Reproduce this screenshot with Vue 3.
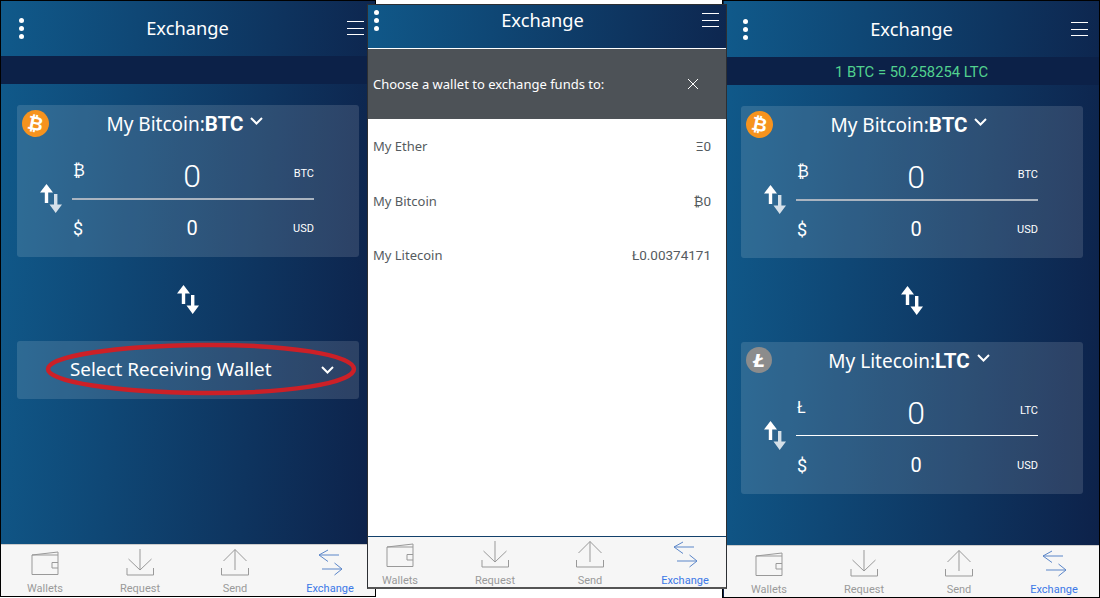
<template>
  <div class="canvas">
    <div v-for="s in screens" :key="s.id" :class="['frame', 'frame-' + s.id]">
      <div class="screen">
        <header class="topbar">
          <span class="dots"><i></i><i></i><i></i></span>
          <h1 class="page-title">Exchange</h1>
          <span class="burger"><i></i><i></i><i></i></span>
        </header>

        <!-- wallet picker -->
        <main v-if="s.picker" class="picker">
          <div class="picker-head">
            <span>Choose a wallet to exchange funds to:</span>
            <svg class="close" width="12" height="12" viewBox="0 0 12 12"><path d="M1 1 11 11M11 1 1 11" /></svg>
          </div>
          <div v-for="w in wallets" :key="w.name" class="picker-row">
            <span>{{ w.name }}</span>
            <span class="picker-amount">{{ w.amount }}</span>
          </div>
        </main>

        <main v-else class="content">
          <div class="rate">{{ s.rate }}</div>
          <div class="cards">
            <template v-for="(card, i) in s.cards" :key="i">
              <div v-if="i === 1" class="swap">
                <svg class="swap-icon" width="22" height="29" viewBox="0 0 22 29"><path d="M0 8.5 6.5 0 13 8.5H8.2V19H4.8V8.5ZM9.5 20.5H14V10H17.4V20.5H22L15.7 29Z" /></svg>
              </div>
              <div v-if="card.coin" class="card">
                <div class="card-title">
                  <span :class="['coin', 'coin-' + card.unit]">{{ card.logo }}</span>
                  <span>{{ card.coin }}:<b>{{ card.unit }}</b></span>
                  <svg class="chevron" width="13" height="8" viewBox="0 0 13 8"><path d="M1 1 6.5 6.5 12 1" /></svg>
                </div>
                <div class="card-body">
                  <div class="card-swap">
                    <svg class="swap-icon" width="22" height="29" viewBox="0 0 22 29"><path d="M0 8.5 6.5 0 13 8.5H8.2V19H4.8V8.5Z" /><path class="dim" d="M9.5 20.5H14V10H17.4V20.5H22L15.7 29Z" /></svg>
                  </div>
                  <div class="convert">
                    <div class="convert-row top">
                      <span class="symbol">{{ card.symbol }}</span>
                      <span class="big">0</span>
                      <span class="unit">{{ card.unit }}</span>
                    </div>
                    <div :class="['rule', { thin: card.thin }]"></div>
                    <div class="convert-row bottom">
                      <span class="symbol">$</span>
                      <span class="small">0</span>
                      <span class="unit">USD</span>
                    </div>
                  </div>
                </div>
              </div>
              <div v-else class="card select-card">
                <span>Select Receiving Wallet</span>
                <svg class="chevron" width="13" height="8" viewBox="0 0 13 8"><path d="M1 1 6.5 6.5 12 1" /></svg>
                <svg class="circled" width="316" height="54" viewBox="0 0 316 54"><path d="M157 3C243 2 310 13 310 27 310 41 243 52 157 51 72 50 4 40 4 27 4 14 72 4 157 3Z" /></svg>
              </div>
            </template>
          </div>
        </main>

        <nav class="tabbar">
          <div v-for="t in tabs" :key="t.label" :class="['tab', { active: t.active }]">
            <svg width="40" height="30" viewBox="0 0 40 30"><path v-for="d in t.paths" :key="d" :d="d" /></svg>
            <span>{{ t.label }}</span>
          </div>
        </nav>
      </div>
    </div>
  </div>
</template>

<script setup>
const btc = { coin: 'My Bitcoin', unit: 'BTC', symbol: '₿', logo: '₿' }
const ltc = { coin: 'My Litecoin', unit: 'LTC', symbol: 'Ł', logo: 'Ł', thin: true }

const screens = [
  { id: 'select', rate: '', cards: [btc, {}] },
  { id: 'picker', picker: true },
  { id: 'filled', rate: '1 BTC = 50.258254 LTC', cards: [btc, ltc] },
]

const wallets = [
  { name: 'My Ether', amount: 'Ξ0' },
  { name: 'My Bitcoin', amount: '₿0' },
  { name: 'My Litecoin', amount: 'Ł0.00374171' },
]

const tabs = [
  { label: 'Wallets', paths: ['M7 7H33V26.5H7Z', 'M7 7 33 4V7', 'M33 14.5H27V20H33'] },
  { label: 'Request', paths: ['M7 20V27H33.5V20', 'M20 1V22', 'M8.5 11 20 22 31.5 11'] },
  { label: 'Send', paths: ['M6.5 20V27H33.5V20', 'M20 1.5V22', 'M8.5 13 20 1.5 31.5 13'] },
  { label: 'Exchange', active: true, paths: ['M29 7H9', 'M18 2 9 7 18 13.5', 'M12 21H32', 'M24.5 15 32 21 24.5 27'] },
]
</script>

<style>
body { background: #fff; }
</style>

<style scoped>
.canvas { position: relative; width: 1100px; height: 598px; overflow: hidden; background: #fff; font-family: "Noto Sans", sans-serif; }
.frame { position: absolute; box-sizing: border-box; overflow: hidden; border: 1px solid #000; background: #0d2149; }
.frame-select { left: 0; top: 0; width: 376px; height: 597px; z-index: 1; }
.frame-select .screen { margin: -1px 0 0 -1px; }
.frame-picker { left: 367px; top: 4px; width: 360px; height: 585px; z-index: 2; border-color: #2c2f33; border-bottom: 2px solid #555; }
.frame-picker .screen { margin: -13px 0 0 -13px; }
.frame-filled { left: 722px; top: 0; width: 378px; height: 598px; }
.frame-filled .screen { margin-left: 1px; }

.screen { width: 375px; height: 596px; display: flex; flex-direction: column; color: #fff; background: linear-gradient(94deg, #105a8b 0%, #0d2149 100%); }

.topbar { height: 56px; flex: none; display: grid; grid-template-columns: 1fr auto 1fr; align-items: center; padding: 0 11px 0 19px; }
.page-title { margin: 0; font-size: 18.3px; font-weight: 400; line-height: 1; transform: translateX(-4px); }
.dots { display: flex; flex-direction: column; gap: 3px; }
.dots i { width: 5px; height: 5px; border-radius: 50%; background: #fff; }
.burger { width: 17px; justify-self: end; display: flex; flex-direction: column; gap: 5.6px; }
.burger i { height: 1px; background: #fff; }

.content { flex: 1; }
.rate { height: 28px; background: #0c2148; color: #52d18f; font: 14.8px/30px Roboto, sans-serif; text-align: center; }
.cards { padding: 21px 16px 0 17px; }
.card { position: relative; height: 152px; box-sizing: border-box; border-radius: 3px; background: rgba(255,255,255,.13); }
.card-title { height: 37px; margin-bottom: 1px; display: flex; align-items: center; justify-content: center; gap: 7px; font-size: 19px; padding-right: 6px; }
.card-title b { font: 700 20.5px Roboto, sans-serif; }
.coin { position: absolute; left: 5px; top: 5px; width: 27px; height: 27px; border-radius: 50%; display: flex; align-items: center; justify-content: center; font: 700 19px "DejaVu Sans", sans-serif; color: #fff; background: #f6931e; transform: rotate(12deg); }
.coin-LTC { background: #8c8c8c; transform: none; width: 26px; height: 26px; font-size: 18px; font-style: italic; }
.chevron { fill: none; stroke: #fff; stroke-width: 2; }
.card-title .chevron { margin-top: -5px; }

.card-body { display: flex; align-items: flex-start; margin-top: 11px; }
.card-swap { width: 55px; flex: none; padding: 31px 0 0 23px; box-sizing: border-box; }
.swap-icon { display: block; fill: #fff; }
.swap-icon .dim { opacity: .8; }
.convert { width: 242px; }
.convert-row { display: grid; grid-template-columns: 1fr auto 1fr; align-items: center; font-family: Roboto, sans-serif; }
.convert-row.top { height: 45px; }
.convert-row.bottom { height: 56px; }
.symbol { font-size: 18px; padding-left: 1px; }
.top .symbol { margin-top: -10px; font-size: 16px; }
.top .unit { margin-top: -5px; }
.bottom .symbol { margin-top: 1px; }
.unit { font-size: 11px; text-align: right; }
.big { font-size: 32px; font-weight: 300; transform: translateX(-1px); }
.small { font-size: 20px; font-weight: 400; transform: translateX(-1px); }
.rule { height: 2px; background: #aab4c0; }
.rule.thin { height: 1px; margin-bottom: 1px; background: #fff; }

.swap { height: 84px; display: flex; align-items: center; justify-content: center; }
.select-card { height: 58px; display: flex; align-items: center; padding: 0 0 2px 53px; font-size: 18.85px; }
.select-card .chevron { position: absolute; left: 304px; top: 25px; }
.circled { position: absolute; left: 27px; top: 1px; fill: none; stroke: #cc2027; stroke-width: 4.5; }

.tabbar { height: 52px; flex: none; box-sizing: border-box; border-top: 1px solid #ccc; background: #f6f6f6; display: flex; justify-content: center; }
.frame-picker .tabbar { border-top-color: #12406b; }
.tab { width: 95px; flex: none; display: flex; flex-direction: column; align-items: center; padding-top: 3px; color: #9a9a9a; font: 11px/13px Roboto, sans-serif; }
.tab svg { display: block; margin-bottom: 4px; fill: none; stroke: #999; stroke-width: 1; }
.tab.active { color: #3b78e7; }
.tab.active svg { stroke: #5b86c9; }

.picker { flex: 1; display: flex; flex-direction: column; background: #fff; color: #555b60; font-size: 13px; }
.picker-head { height: 70px; flex: none; margin-top: 1px; display: flex; align-items: center; justify-content: space-between; padding: 0 31px 0 18px; background: #4d5257; color: #fff; }
.close { fill: none; stroke: #fff; stroke-width: 1; }
.picker-row { height: 54.5px; flex: none; display: flex; align-items: center; justify-content: space-between; padding: 0 19px 0 18px; }
.picker-amount { font: 13.5px Roboto, "DejaVu Sans", sans-serif; }
</style>
